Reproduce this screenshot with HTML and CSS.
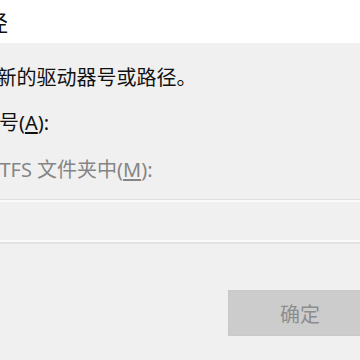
FILE: index.html
```html
<!DOCTYPE html>
<html lang="zh-CN">
<head>
<meta charset="utf-8">
<title>添加驱动器号或路径</title>
<link rel="stylesheet" href="styles.css">
</head>
<body>
  <div class="dialog">
    <header class="titlebar">
      <span class="title">添加驱动器号或路径</span>
    </header>
    <main class="content">
      <p class="intro">为 新加卷 添加新的驱动器号或路径。</p>
      <p class="option">分配以下驱动器号(<u>A</u>):</p>
      <p class="option disabled">装入以下空白 NTFS 文件夹中(<u>M</u>):</p>
      <div class="pathbox"></div>
      <div class="actions">
        <button class="btn" disabled>确定</button>
      </div>
    </main>
  </div>
</body>
</html>
```

FILE: styles.css
```css
html, body {
  margin: 0;
  padding: 0;
  width: 360px;
  height: 360px;
  overflow: hidden;
  background: #f0f0f0;
}

.dialog {
  display: flex;
  flex-direction: column;
  font-family: "Noto Sans", "Noto Sans CJK SC", sans-serif;
  color: #111111;
}

.titlebar {
  height: 43px;
  background: #ffffff;
  display: flex;
  align-items: center;
  overflow: hidden;
}

.title {
  flex: none;
  margin-left: -190px;
  font-size: 22px;
  line-height: 30px;
  white-space: nowrap;
}

.content {
  display: flex;
  flex-direction: column;
}

.intro {
  margin: 23px 0 0 -134px;
  font-size: 20px;
  line-height: 24px;
  white-space: nowrap;
}

.option {
  margin: 21px 0 0 -141px;
  font-size: 20px;
  line-height: 24px;
  white-space: nowrap;
}

.option + .option {
  margin-top: 23px;
}

.option u {
  text-underline-offset: 2px;
}

.disabled {
  color: #858585;
}

.pathbox {
  margin-top: 17px;
  height: 42px;
  border-top: 1px solid #dedede;
  border-bottom: 2px solid #e2e2e2;
  box-shadow: inset 0 2px 0 #fafafa, inset 0 -2px 0 #fafafa;
  background: #f0f0f0;
}

.actions {
  display: flex;
  margin-top: 46px;
  padding-left: 228px;
}

.btn {
  flex: none;
  width: 144px;
  height: 46px;
  background: #cccccc;
  border: 1px solid #c8c8c8;
  color: #8d8d8d;
  font-family: "Noto Sans", "Noto Sans CJK SC", sans-serif;
  font-size: 20px;
  padding: 0;
}
```
